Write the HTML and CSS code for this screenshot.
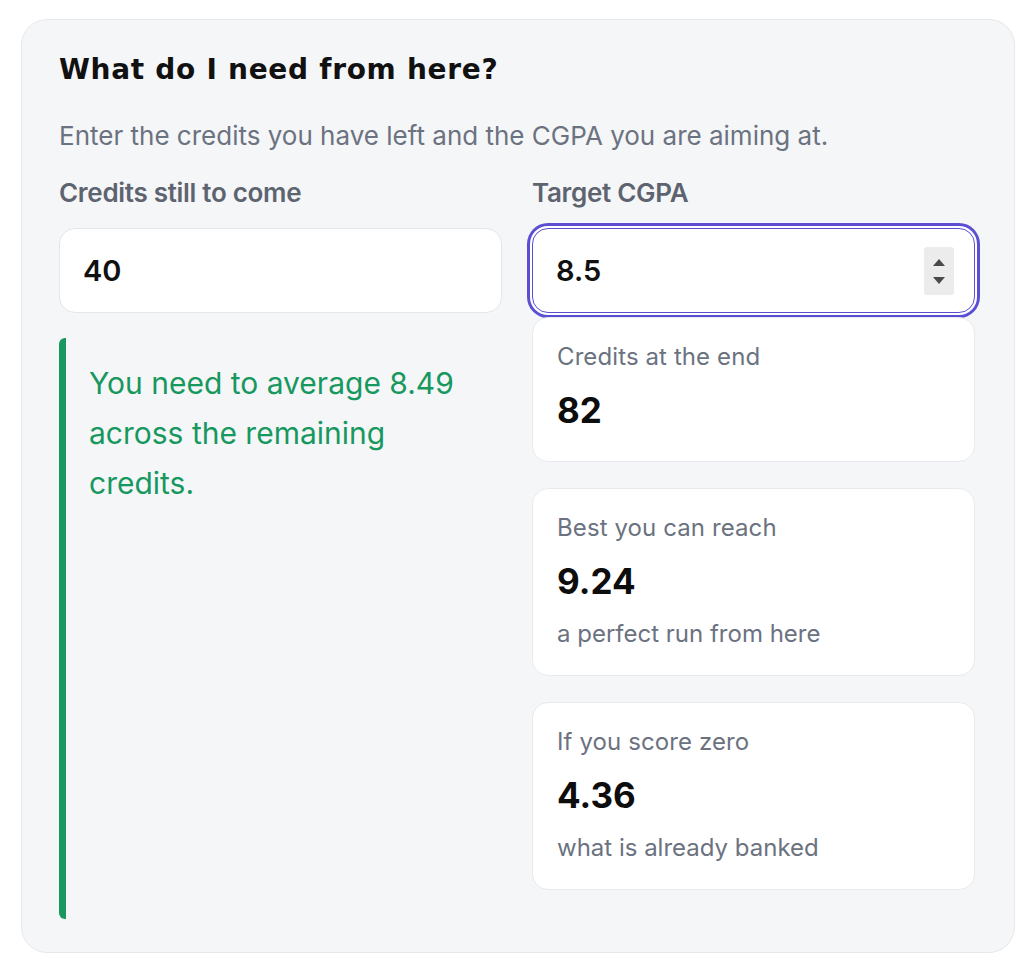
FILE: index.html
```html
<!DOCTYPE html>
<html lang="en">

<head>
    <meta charset="UTF-8">
    <title>What do I need from here?</title>
<link rel="stylesheet" href="styles.css">
</head>
<body>
<div class="page">
    <section class="panel">
        <h2 class="panel-title">What do I need from here?</h2>
        <p class="panel-desc">Enter the credits you have left and the CGPA you are aiming at.</p>

        <div class="form-grid">
            <div class="col">
                <label class="field-label" for="credits">Credits still to come</label>
                <input class="field-input" id="credits" type="text" value="40">
                <div class="callout">
                    <p>You need to average 8.49 across the remaining credits.</p>
                </div>
            </div>

            <div class="col col-right">
                <label class="field-label" for="target">Target CGPA</label>
                <div class="input-wrap">
                    <input class="field-input focused" id="target" type="text" value="8.5">
                    <span class="spinner">
                        <svg width="14" height="34" viewBox="0 0 14 34">
                            <path d="M1 12 L7 5 L13 12 Z" fill="#4a4a4a"/>
                            <path d="M1 23 L7 30 L13 23 Z" fill="#4a4a4a"/>
                        </svg>
                    </span>
                </div>
                <div class="stats">
                    <div class="stat">
                        <p class="stat-label">Credits at the end</p>
                        <p class="stat-value">82</p>
                    </div>
                    <div class="stat">
                        <p class="stat-label">Best you can reach</p>
                        <p class="stat-value">9.24</p>
                        <p class="stat-sub">a perfect run from here</p>
                    </div>
                    <div class="stat">
                        <p class="stat-label">If you score zero</p>
                        <p class="stat-value">4.36</p>
                        <p class="stat-sub">what is already banked</p>
                    </div>
                </div>
            </div>
        </div>
    </section>
</div>
</body>

</html>
```

FILE: styles.css
```css
body{
    margin: 0;
    background: #ffffff;
    font-family: Inter, "Noto Sans", sans-serif;
    color: #111111;
}
.page{
    padding: 19px 21px;
}
.panel{
    background: #f5f6f8;
    border: 1px solid #e6e8eb;
    border-radius: 26px;
    padding: 33px 39px 33px 37px;
}
.panel-title{
    margin: 0;
    font-family: "DejaVu Sans", sans-serif;
    font-size: 28px;
    line-height: 34px;
    font-weight: 700;
    color: #111111;
    letter-spacing: 0.7px;
}
.panel-desc{
    margin: 33px 0 0;
    font-size: 26px;
    line-height: 32px;
    color: #6b7280;
}
.form-grid{
    display: grid;
    grid-template-columns: 1fr 1fr;
    column-gap: 30px;
    margin-top: 27px;
}
.col{
    display: flex;
    flex-direction: column;
}
.col-right{
    padding-bottom: 29px;
}
.field-label{
    font-size: 26px;
    line-height: 28px;
    font-weight: 600;
    color: #5d6470;
    letter-spacing: -0.3px;
}
.field-input{
    box-sizing: border-box;
    width: 100%;
    height: 85px;
    margin-top: 21px;
    padding: 0 23px;
    border: 1px solid #e4e6ea;
    border-radius: 16px;
    background: #ffffff;
    font-family: Inter, sans-serif;
    font-size: 29px;
    font-weight: 600;
    color: #111111;
    outline: none;
}
.input-wrap{
    position: relative;
}
.focused{
    border: 1px solid #5a4fd3;
    box-shadow: 0 0 0 2px #ffffff, 0 0 0 5px #5a4fd3;
}
.spinner{
    position: absolute;
    right: 21px;
    top: 40px;
    width: 30px;
    height: 48px;
    background: #ececec;
    border-radius: 3px;
    display: flex;
    align-items: center;
    justify-content: center;
}
.callout{
    flex: 1;
    margin-top: 25px;
    border-left: 7px solid #17985f;
    border-radius: 6px 0 0 6px;
    padding: 20px 20px 0 23px;
}
.callout p{
    margin: 0;
    font-size: 30px;
    line-height: 50px;
    color: #17985f;
}
.stats{
    display: flex;
    flex-direction: column;
    gap: 26px;
    margin-top: 4px;
    position: relative;
}
.stat{
    background: #ffffff;
    border: 1px solid #e8eaed;
    border-radius: 16px;
    padding: 23px 24px 25px;
}
.stat p{
    margin: 0;
}
.stat-label{
    font-size: 24px;
    line-height: 32px;
    color: #6b7280;
    letter-spacing: 0.1px;
}
.stat-value{
    margin-top: 15px !important;
    font-size: 35px;
    line-height: 44px;
    font-weight: 700;
    color: #0d0d0d;
}
.stat-value:last-child{
    margin-bottom: 4px !important;
}
.stat-sub{
    margin-top: 15px !important;
    font-size: 24px;
    line-height: 32px;
    color: #6b7280;
}
```
